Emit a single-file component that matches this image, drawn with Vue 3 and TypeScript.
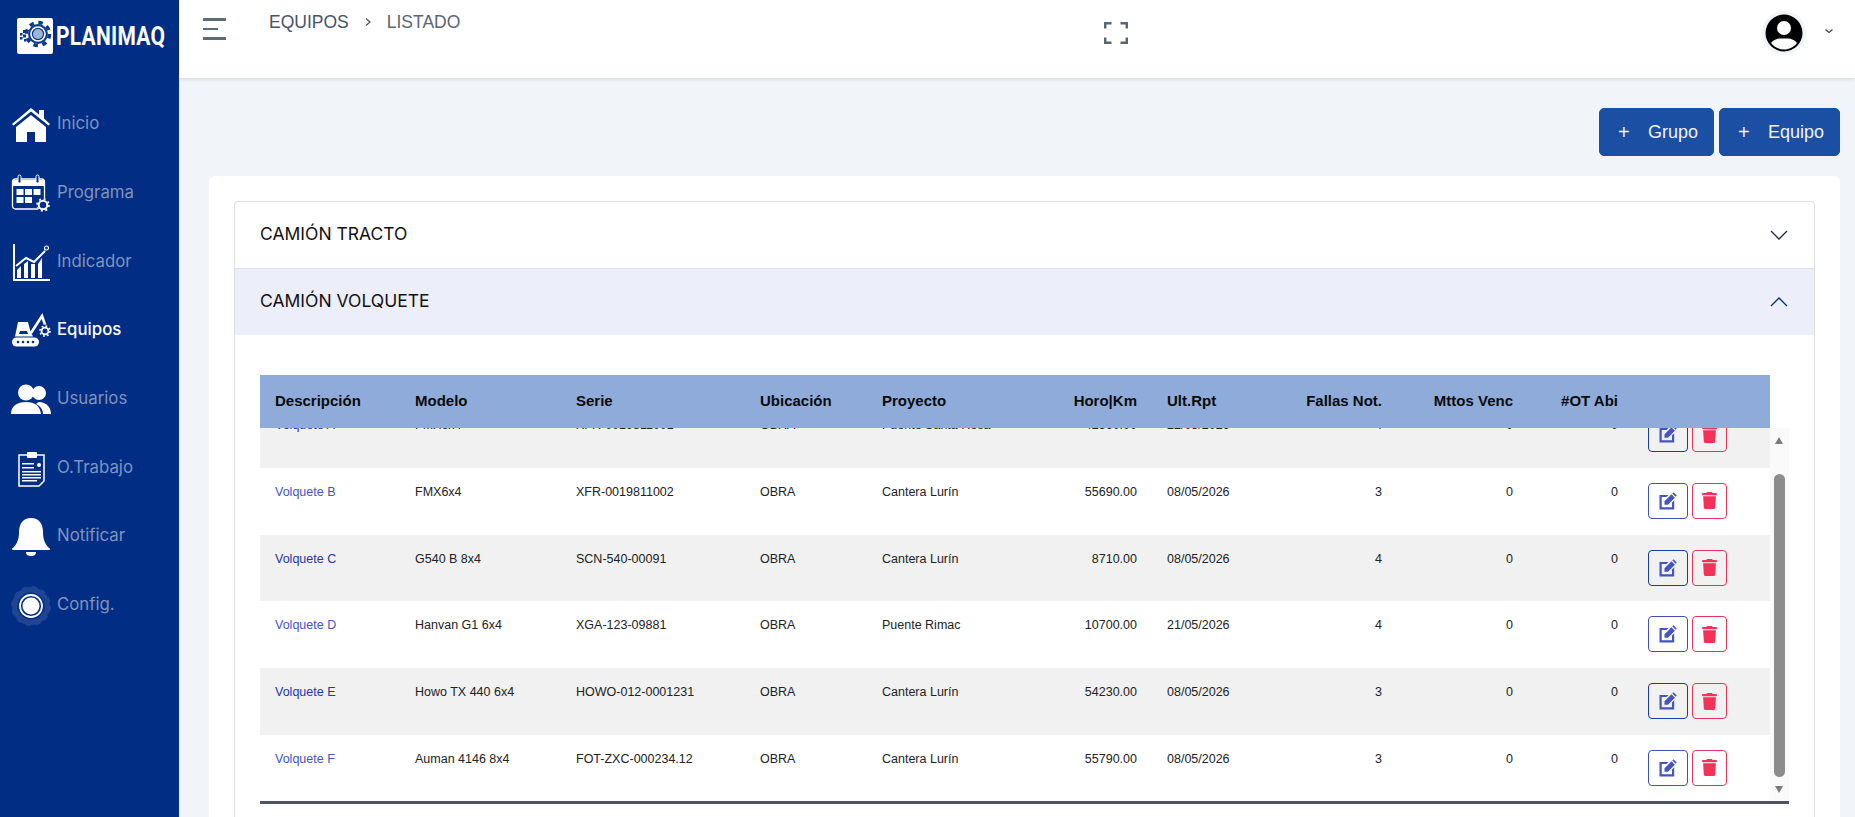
<script setup lang="ts">
interface Row { d: string; m: string; s: string; u: string; p: string; h: string; r: string; f: number }
const rows: Row[] = [
  { d: 'Volquete A', m: 'FMX6x4', s: 'XFR-0019811001', u: 'OBRA', p: 'Puente Santa Rosa', h: '42560.00', r: '22/05/2026', f: 4 },
  { d: 'Volquete B', m: 'FMX6x4', s: 'XFR-0019811002', u: 'OBRA', p: 'Cantera Lurín', h: '55690.00', r: '08/05/2026', f: 3 },
  { d: 'Volquete C', m: 'G540 B 8x4', s: 'SCN-540-00091', u: 'OBRA', p: 'Cantera Lurín', h: '8710.00', r: '08/05/2026', f: 4 },
  { d: 'Volquete D', m: 'Hanvan G1 6x4', s: 'XGA-123-09881', u: 'OBRA', p: 'Puente Rimac', h: '10700.00', r: '21/05/2026', f: 4 },
  { d: 'Volquete E', m: 'Howo TX 440 6x4', s: 'HOWO-012-0001231', u: 'OBRA', p: 'Cantera Lurín', h: '54230.00', r: '08/05/2026', f: 3 },
  { d: 'Volquete F', m: 'Auman 4146 8x4', s: 'FOT-ZXC-000234.12', u: 'OBRA', p: 'Cantera Lurín', h: '55790.00', r: '08/05/2026', f: 3 },
]
const nav = ['Inicio', 'Programa', 'Indicador', 'Equipos', 'Usuarios', 'O.Trabajo', 'Notificar', 'Config.']
</script>

<template>
  <div class="app">
    <aside class="side">
      <div class="logo">
        <span class="logo-box">
          <svg viewBox="0 0 36 36" width="36" height="36">
            <g fill="#0a3a8c">
              <rect x="3" y="15" width="2.500" height="2.500"/><rect x="6" y="12" width="3" height="3"/><rect x="6" y="16.500" width="3" height="3"/><rect x="3" y="19" width="2.500" height="2.500"/><rect x="7" y="21" width="2.500" height="2.500"/>
            </g>
            <circle cx="21" cy="16" r="10" fill="#0a3a8c"/>
            <circle cx="21" cy="16" r="11.500" fill="none" stroke="#0a3a8c" stroke-width="3.500" stroke-dasharray="4.500 4.530"/>
            <circle cx="21" cy="16" r="7.800" fill="#fff"/>
            <circle cx="21" cy="16" r="6.200" fill="#0a3a8c"/>
            <circle cx="21" cy="16" r="5" fill="#9db4da"/>
          </svg>
        </span>
        <span class="logo-text">PLANIMAQ</span>
      </div>
      <nav class="nav">
        <a v-for="(n, i) in nav" :key="n" class="nav-item" :class="{ active: n === 'Equipos' }">
          <span class="nav-ico">
            <svg v-if="i === 0" viewBox="0 0 40 40" width="40" height="40" fill="#fff"><path d="M1 19 20 3l8 6.500V5h5v8.500l6 5.500-1.500 1.500L20 6.500 2.500 20.500z"/><path d="M5 22 20 10l15 12v15H24V27h-8v10H5z"/></svg>
            <svg v-else-if="i === 1" viewBox="0 0 40 40" width="40" height="40"><rect x="1.500" y="5" width="32" height="30" rx="3" fill="none" stroke="#fff" stroke-width="1.300"/><path d="M2 6h31v6H2z" fill="#fff"/><rect x="7" y="1" width="3" height="8" rx="1.500" fill="#012d84" stroke="#fff"/><rect x="25" y="1" width="3" height="8" rx="1.500" fill="#012d84" stroke="#fff"/><g fill="#fff"><rect x="5.500" y="15" width="7" height="6"/><rect x="14" y="15" width="7" height="6"/><rect x="22.500" y="15" width="7" height="6"/><rect x="5.500" y="23" width="7" height="6"/><rect x="14" y="23" width="7" height="6"/></g><circle cx="32" cy="31" r="6.800" fill="#012d84"/><circle cx="32" cy="31" r="4.300" fill="none" stroke="#fff" stroke-width="2"/><circle cx="32" cy="31" r="6" fill="none" stroke="#fff" stroke-width="1.600" stroke-dasharray="2 2.700"/></svg>
            <svg v-else-if="i === 2" viewBox="0 0 40 40" width="40" height="40" fill="#fff"><path d="M2 1h2v35h35v2H2z"/><path d="M6 27v8h4V23zM13 21v14h4V18zM20 21v14h4V21zM27 21v14h4V15z"/><path d="M5 23 15 15l8 4 11-11" fill="none" stroke="#fff" stroke-width="2"/><circle cx="35.500" cy="5" r="2" fill="none" stroke="#fff" stroke-width="1.200"/></svg>
            <svg v-else-if="i === 3" viewBox="0 0 40 40" width="40" height="40" fill="#fff"><rect x="1" y="26.500" width="27" height="9" rx="4.500"/><g fill="#012d84"><circle cx="7" cy="31" r="1.300"/><circle cx="12" cy="31" r="1.300"/><circle cx="17" cy="31" r="1.300"/><circle cx="22" cy="31" r="1.300"/></g><path d="M4 25.500 7 11h10l2 8 3 6.500z"/><path d="M9 20h7l1 3H8z" fill="#012d84"/><path d="M20 22 31 5l3.500 10" fill="none" stroke="#fff" stroke-width="2.600"/><circle cx="34" cy="20" r="6.600" fill="#012d84"/><circle cx="34" cy="20" r="3.400" fill="none" stroke="#fff" stroke-width="1.800"/><circle cx="34" cy="20" r="5" fill="none" stroke="#fff" stroke-width="1.600" stroke-dasharray="1.800 2.100"/></svg>
            <svg v-else-if="i === 4" viewBox="0 0 40 40" width="40" height="40" fill="#fff"><circle cx="28" cy="13" r="7"/><path d="M28 22c6 0 12 4 12 12H32c0-5-3-8-7-10 1-1 2-2 3-2z"/><circle cx="15" cy="12.500" r="8"/><path d="M0 34c0-8 6-12 15-12s14 4 15 12z"/></svg>
            <svg v-else-if="i === 5" viewBox="0 0 40 40" width="40" height="40"><path d="M8 6h25v26l-5 5H8z" fill="#012d84" stroke="#fff" stroke-width="1.500"/><rect x="16" y="3" width="10" height="6" rx="1" fill="#fff"/><g fill="#fff"><rect x="11" y="14" width="12" height="1.500"/><rect x="11" y="18" width="12" height="1.500"/><circle cx="28" cy="16" r="2"/><rect x="11" y="22" width="19" height="1.500"/><rect x="11" y="25" width="19" height="1.500"/><rect x="11" y="28" width="19" height="1.500"/><rect x="11" y="31" width="15" height="1.500"/></g></svg>
            <svg v-else-if="i === 6" viewBox="0 0 40 40" width="40" height="40" fill="#fff"><path d="M20 1c8 0 12 6 12 14 0 9 3 13 6 16H2c3-3 6-7 6-16C8 7 12 1 20 1z"/><rect x="1" y="31" width="38" height="2" rx="1"/><path d="M15 35h10c0 3-2 4-5 4s-5-1-5-4z"/></svg>
            <svg v-else viewBox="0 0 40 40" width="40" height="40"><circle cx="20" cy="20" r="16" fill="none" stroke="#1f4492" stroke-width="6"/><circle cx="20" cy="20" r="18" fill="none" stroke="#1f4492" stroke-width="4" stroke-dasharray="5 4.420"/><circle cx="20" cy="20" r="13.500" fill="#012d84"/><circle cx="20" cy="20" r="11" fill="none" stroke="#fff" stroke-width="1.800"/><circle cx="20" cy="20" r="8.500" fill="#fff"/></svg>
          </span>
          <span class="nav-label">{{ n }}</span>
        </a>
      </nav>
    </aside>

    <div class="main">
      <header class="top">
        <div class="top-left">
          <span class="burger"><i class="b1"></i><i class="b2"></i><i class="b3"></i></span>
          <div class="crumbs">
            <span class="c1">EQUIPOS</span>
            <svg class="c-sep" viewBox="0 0 10 10" width="10" height="10"><path d="M3 1.500 7 5 3 8.500" fill="none" stroke="#4b5563" stroke-width="1.200"/></svg>
            <span class="c2">LISTADO</span>
          </div>
        </div>
        <svg class="full" viewBox="0 0 24 22" width="24" height="22" fill="none" stroke="#5b6570" stroke-width="2.500"><path d="M1.200 6.500V1.200H7.500M16.500 1.200h6.300v5.300M22.800 15.500v5.300H16.500M7.500 20.800H1.200v-5.300"/></svg>
        <div class="user">
          <span class="avatar">
            <svg viewBox="0 0 38 38" width="38" height="38"><circle cx="19" cy="19" r="18.500" fill="#000"/><circle cx="19" cy="14" r="7" fill="#fff"/><path d="M6 29c2-3 6-4.500 9-4.500h8c3 0 7 1.500 9 4.500-3 4-8 6.500-13 6.500S9 33 6 29z" fill="#fff"/></svg>
          </span>
          <svg class="caret" viewBox="0 0 10 10" width="10" height="10"><path d="M1.500 3.500 5 6.500l3.500-3" fill="none" stroke="#374151" stroke-width="1.200"/></svg>
        </div>
      </header>

      <div class="content">
        <div class="actions">
          <button class="btn g"><span class="plus">+</span>Grupo</button>
          <button class="btn e"><span class="plus">+</span>Equipo</button>
        </div>
        <section class="card">
          <div class="acc">
            <div class="acc-head">
              <span class="acc-title">CAMIÓN TRACTO</span>
              <svg viewBox="0 0 20 20" width="20" height="20"><path d="M2 6 10 14l8-8" fill="none" stroke="#1f2937" stroke-width="1.300"/></svg>
            </div>
            <div class="acc-head open">
              <span class="acc-title">CAMIÓN VOLQUETE</span>
              <svg viewBox="0 0 20 20" width="20" height="20"><path d="M2 14 10 6l8 8" fill="none" stroke="#0a2f84" stroke-width="1.300"/></svg>
            </div>
            <div class="acc-body">
              <div class="tbl-wrap">
                <div class="thead tr">
                  <span class="c-d">Descripción</span><span class="c-m">Modelo</span><span class="c-s">Serie</span><span class="c-u">Ubicación</span><span class="c-p">Proyecto</span><span class="c-h num">Horo|Km</span><span class="c-r">Ult.Rpt</span><span class="c-f num">Fallas Not.</span><span class="c-v num">Mttos Venc</span><span class="c-o num">#OT Abi</span><span class="c-a"></span>
                </div>
                <div class="scroll">
                  <div class="tbody">
                    <div v-for="r in rows" :key="r.d" class="tr row">
                      <span class="c-d link">{{ r.d }}</span><span class="c-m">{{ r.m }}</span><span class="c-s">{{ r.s }}</span><span class="c-u">{{ r.u }}</span><span class="c-p">{{ r.p }}</span><span class="c-h num">{{ r.h }}</span><span class="c-r">{{ r.r }}</span><span class="c-f num">{{ r.f }}</span><span class="c-v num">0</span><span class="c-o num">0</span>
                      <span class="c-a">
                        <button class="ib edit"><svg viewBox="0 0 18 18" width="18" height="18" fill="#4553c4"><path d="M.5 3h9l-2 2H2.700v10.300H13v-4.800l2.200-2.200v9.200H.5z"/><path d="M5.500 12.700V9.300l7-7 3.400 3.400-7 7zM13.400 1.400l1.100-1.100 3.300 3.300-1.100 1.100z"/></svg></button>
                        <button class="ib del"><svg viewBox="0 0 448 512" width="15" height="17" fill="#f43158"><path d="M135.200 17.700L128 32H32C14.300 32 0 46.300 0 64S14.300 96 32 96H416c17.700 0 32-14.300 32-32s-14.300-32-32-32H320l-7.200-14.300C307.400 6.800 296.300 0 284.200 0H163.800c-12.100 0-23.200 6.800-28.600 17.700zM416 128H32L53.200 467c1.600 25.300 22.600 45 47.900 45H346.900c25.300 0 46.300-19.700 47.900-45L416 128z"/></svg></button>
                      </span>
                    </div>
                  </div>
                </div>
                <div class="sbar">
                  <i class="arrow up"></i>
                  <i class="thumb"></i>
                  <i class="arrow down"></i>
                </div>
              </div>
              <div class="rule"></div>
            </div>
          </div>
        </section>
      </div>
    </div>
  </div>
</template>

<style>
html, body { margin: 0; height: 100%; overflow: hidden; }
</style>

<style scoped>
* { box-sizing: border-box; }
.app { display: flex; width: 1855px; height: 817px; overflow: hidden; font-family: "Liberation Sans", Arial, sans-serif; background: #f1f4f8; }
.side { width: 179px; flex: none; background: #012d84; display: flex; flex-direction: column; }
.logo { display: flex; align-items: center; height: 36px; margin: 18px 0 0 17px; gap: 3px; }
.logo-box { width: 36px; height: 36px; background: #fff; border-radius: 2px; display: block; overflow: hidden; flex: none; }
.logo-box svg { display: block; }
.logo-text { font-family: Roboto, sans-serif; font-weight: 700; font-size: 25px; color: #fff; transform: scaleX(.84); transform-origin: left center; letter-spacing: .3px; }
.nav { margin-top: 37px; display: flex; flex-direction: column; }
.nav-item { height: 68.700px; display: flex; align-items: center; padding-left: 11px; gap: 6px; }
.nav-ico { width: 40px; height: 40px; display: block; }
.nav-ico svg { display: block; }
.nav-label { font-family: Inter, sans-serif; font-size: 16.800px; color: #8093bd; margin-top: -4px; }
.active .nav-label { color: #fff; font-weight: 500; }
.main { flex: 1; min-width: 0; display: flex; flex-direction: column; }
.top { height: 78px; flex: none; background: #fff; box-shadow: 0 1px 4px rgba(0,0,0,.12); display: flex; align-items: flex-start; position: relative; z-index: 1; padding: 0 21px 0 24px; justify-content: space-between; }
.top-left { display: flex; width: 540px; }
.burger { display: flex; flex-direction: column; gap: 7px; margin-top: 18px; width: 23px; }
.burger i { display: block; height: 2.500px; background: #5f6b76; }
.b1 { width: 23px; } .b2 { width: 15px; } .b3 { width: 23px; }
.crumbs { display: flex; align-items: center; margin: 12px 0 0 43px; height: 20px; font-size: 17.500px; color: #475467; }
.c-sep { margin: 0 14px 0 14px; }
.c2 { color: #5b6675; }
.full { margin-top: 22px; margin-right: 273px; }
.user { display: flex; align-items: flex-start; margin-top: 11px; }
.avatar { width: 44px; height: 44px; background: #f1f4f8; border-radius: 50%; display: flex; align-items: center; justify-content: center; }
.caret { margin: 15px 0 0 18px; }
.content { flex: 1; min-height: 0; padding: 30px 0 0 30px; overflow: hidden; }
.actions { display: flex; justify-content: flex-end; gap: 5px; padding-right: 15px; }
.btn { height: 48px; background: #1b4fa3; color: #eef3fb; border: 1px solid #1b4fa3; border-radius: 5px; font: 18px "Liberation Sans", Arial, sans-serif; display: flex; align-items: center; padding: 0 0 0 18px; }
.btn.g { width: 115px; } .btn.e { width: 121px; }
.plus { width: 30px; text-align: left; font-size: 20px; }
.card { background: #fff; border-radius: 6px; margin: 20px 15px 0 0; padding: 25px; height: 700px; }
.acc { border: 1px solid #dcdee2; border-radius: 4px; height: 700px; }
.acc-head { height: 67px; display: flex; align-items: center; justify-content: space-between; padding: 0 25px 0 25px; font-family: Inter, sans-serif; font-size: 17.500px; color: #111; border-bottom: 1px solid #dfe2e7; }
.acc-title { margin-top: -4px; }
.acc-head.open { background: #eceffa; height: 66px; border-bottom: 0; }
.acc-body { padding: 40px 0 0 25px; position: relative; }
.tbl-wrap { width: 1529px; position: relative; }
.thead { position: relative; z-index: 2; background: #8eabda; height: 53px; font-weight: 700; font-size: 15px; color: #0b0b0b; width: 1510px; padding-bottom: 2px; }
.tr { display: flex; align-items: center; padding-left: 15px; }
.tr > span { flex: none; white-space: nowrap; }
.scroll { height: 373px; overflow: hidden; width: 1510px; }
.tbody { margin-top: -27px; }
.row { height: 66.750px; font-size: 12.500px; color: #222; align-items: flex-start; padding-top: 17px; }
.row:nth-child(odd) { background: #f1f1f1; }
.c-d { width: 140px; } .c-m { width: 161px; } .c-s { width: 184px; } .c-u { width: 122px; } .c-p { width: 140px; }
.c-h { width: 115px; }
.c-r { width: 130px; padding-left: 30px; }
.c-f { width: 115px; } .c-v { width: 131px; } .c-o { width: 105px; }
.c-a { padding-left: 30px; display: flex; gap: 4px; margin-top: -2px; }
.thead .c-a { margin: 0; }
.num { text-align: right; }
.link { color: #4553c4; }
.row:nth-child(odd) .link { color: #2436a8; }
.ib { height: 36px; background: transparent; border-radius: 4px; padding: 0; display: flex; align-items: center; justify-content: center; }
.edit { width: 40px; border: 1px solid #3f51b5; }
.row:nth-child(odd) .edit { border-color: #1a3a9e; }
.del { width: 35px; border: 1px solid #e0365c; }
.sbar { position: absolute; left: 1510px; top: 53px; width: 19px; height: 373px; background: #fafafa; }
.thumb { position: absolute; left: 4px; top: 46px; width: 11px; height: 303px; background: #8c8c8c; border-radius: 6px; }
.arrow { position: absolute; left: 4.500px; width: 0; height: 0; border-left: 4.500px solid transparent; border-right: 4.500px solid transparent; }
.up { top: 9px; border-bottom: 7px solid #7b7b7b; }
.down { top: 358px; border-top: 7px solid #7b7b7b; }
.rule { height: 3px; background: #4b5563; width: 1529px; }
</style>
